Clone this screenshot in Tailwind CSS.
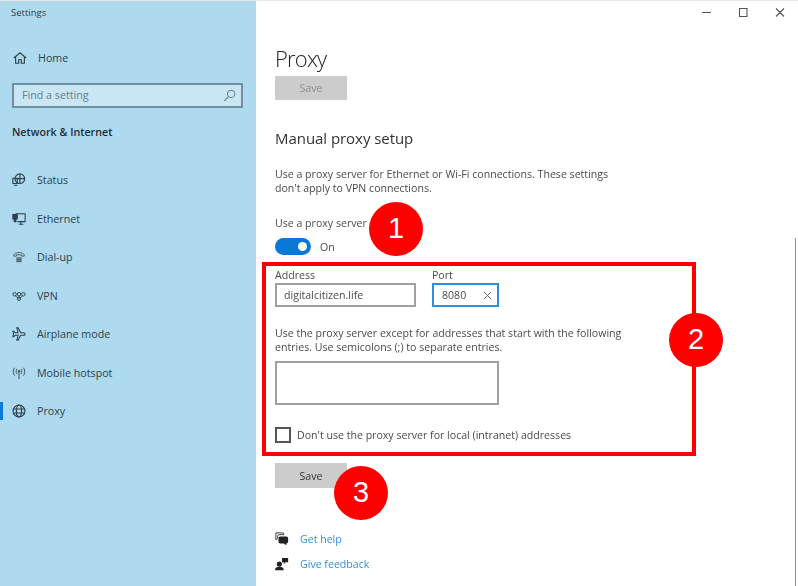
<!DOCTYPE html>
<html lang="en">
<head>
<meta charset="UTF-8">
<title>Settings - Proxy</title>
<script src="https://cdn.jsdelivr.net/npm/@tailwindcss/browser@4"></script>
</head>
<body class="bg-white font-['Open_Sans',sans-serif] overflow-hidden">
<div class="relative w-[798px] h-[586px] flex overflow-hidden blur-[0.7px]">

  <!-- Sidebar -->
  <aside class="w-[256px] h-full bg-[#aedaf0] text-[#2d3f4a] text-[10.7px] shrink-0 relative">
    <div class="pl-[11px] pt-[6px] h-[46px] text-[9.5px] leading-[14px]">Settings</div>
    <div class="flex items-center h-[24px] pl-[13px]">
      <svg class="w-[14px] h-[14px]" viewBox="0 0 16 16" fill="none" stroke="#2d3f4a" stroke-width="1.300"><path d="M1 8 8 2l7 6M3 7v7h3.500v-4h3v4H13V7"/></svg>
      <span class="ml-[11px]">Home</span>
    </div>
    <div class="mt-[13px] ml-[12px] w-[231px] h-[25px] border-2 border-[#6f919f] bg-[#c9e6f4] flex items-center justify-between pl-[8px] pr-[5px] text-[#66808c]">
      <span>Find a setting</span>
      <svg class="w-[13px] h-[13px]" viewBox="0 0 16 16" fill="none" stroke="#66808c" stroke-width="1.300"><circle cx="10" cy="6" r="4.500"/><path d="M6.700 9.300 1.500 14.500"/></svg>
    </div>
    <div class="mt-[16px] ml-[12px] h-[16px] leading-[16px] font-semibold text-[#1f2d35]">Network &amp; Internet</div>

    <nav class="mt-[21px]">
      <div class="flex items-center h-[38.5px] pl-[12px]">
        <svg class="w-[14px] h-[14px]" viewBox="0 0 16 16" fill="none" stroke="#2d3f4a" stroke-width="1.300"><circle cx="9" cy="6.500" r="5.500"/><path d="M3.500 6.500h11M9 1v11M1 6h5v6H1zM2 14h4"/></svg>
        <span class="ml-[11px]">Status</span>
      </div>
      <div class="flex items-center h-[38.5px] pl-[12px]">
        <svg class="w-[14px] h-[14px]" viewBox="0 0 16 16" fill="none" stroke="#2d3f4a" stroke-width="1.200"><path d="M4 2h11v9H6M8 14h5M10 11v3"/><path d="M1 3h5v5H1zM2.500 8v3h2V8" fill="#2d3f4a"/></svg>
        <span class="ml-[11px]">Ethernet</span>
      </div>
      <div class="flex items-center h-[38.5px] pl-[12px]">
        <svg class="w-[14px] h-[14px]" viewBox="0 0 16 16" fill="none" stroke="#4a5a64" stroke-width="1.100"><path d="M2 7V5.500C4 2 12 2 14 5.500V7h-3V5.500H5V7zM5 9h6M5 11h6M5 13h6M6 9v5M8 9v5M10 9v5"/></svg>
        <span class="ml-[11px]">Dial-up</span>
      </div>
      <div class="flex items-center h-[38.5px] pl-[12px]">
        <svg class="w-[14px] h-[14px]" viewBox="0 0 16 16" fill="none" stroke="#2d3f4a" stroke-width="1.100"><circle cx="3" cy="6" r="2"/><circle cx="8" cy="6" r="2"/><circle cx="13" cy="6" r="2"/><circle cx="8" cy="11.500" r="1.700"/><path d="M4 8l3 2.500M8 8v2M12 8l-3 2.500"/></svg>
        <span class="ml-[11px]">VPN</span>
      </div>
      <div class="flex items-center h-[38.5px] pl-[12px]">
        <svg class="w-[14px] h-[14px]" viewBox="0 0 16 16" fill="none" stroke="#2d3f4a" stroke-width="1.200"><path d="M15 8c0-1-1-1.500-2-1.500H10L7 1H5.500l1.500 5.500H3.500L2 5H1l.7 3L1 11h1l1.500-1.500H7L5.500 15H7l3-5.500h3c1 0 2-.5 2-1.500z"/></svg>
        <span class="ml-[11px]">Airplane mode</span>
      </div>
      <div class="flex items-center h-[38.5px] pl-[12px]">
        <svg class="w-[14px] h-[14px]" viewBox="0 0 16 16" fill="none" stroke="#3b4c56" stroke-width="1.100"><path d="M8 7v8M5.500 3.500c-1 1.800-1 3.700 0 5.500M10.500 3.500c1 1.800 1 3.700 0 5.500M2.800 2c-1.800 3-1.800 6 0 9M13.200 2c1.800 3 1.800 6 0 9"/><circle cx="8" cy="6" r="1" fill="#3b4c56"/></svg>
        <span class="ml-[11px]">Mobile hotspot</span>
      </div>
      <div class="relative flex items-center h-[38.5px] pl-[12px]">
        <div class="absolute left-0 top-[10px] w-[3px] h-[18px] bg-[#0a78d7]"></div>
        <svg class="w-[14px] h-[14px]" viewBox="0 0 16 16" fill="none" stroke="#2d3f4a" stroke-width="1.300"><circle cx="8" cy="8" r="6.800"/><ellipse cx="8" cy="8" rx="3" ry="6.800"/><path d="M1.500 5.700h13M1.500 10.300h13"/></svg>
        <span class="ml-[11px]">Proxy</span>
      </div>
    </nav>
  </aside>

  <!-- Main -->
  <main class="flex-1 pl-[19px] text-[10.6px] leading-[14px] text-[#4a4a4a]">
    <h1 class="mt-[44px] h-[28px] text-[22px] leading-[28px] font-light tracking-[-0.8px] text-[#222]">Proxy</h1>
    <div class="mt-[4px] w-[72px] h-[24px] bg-[#cccccc] text-[#8f8f8f] flex items-center justify-center">Save</div>
    <h2 class="mt-[28px] h-[20px] text-[15px] leading-[20px] tracking-[-0.05px] text-[#333]">Manual proxy setup</h2>
    <p class="mt-[19px] w-[350px]">Use a proxy server for Ethernet or Wi-Fi connections. These settings don't apply to VPN connections.</p>
    <p class="mt-[21px]">Use a proxy server</p>
    <div class="mt-[8px] flex items-center h-[17px]">
      <div class="w-[36px] h-[17px] rounded-full bg-[#0a78d7] flex items-center justify-end pr-[4px]">
        <div class="w-[9px] h-[9px] rounded-full bg-white"></div>
      </div>
      <span class="ml-[9px]">On</span>
    </div>
    <div class="mt-[13px] flex gap-[16px]">
      <div>
        <div class="h-[14px]">Address</div>
        <div class="mt-[1px] w-[141px] h-[24px] border-2 border-[#a0a0a0] pl-[7px] flex items-center">digitalcitizen.life</div>
      </div>
      <div>
        <div class="h-[14px]">Port</div>
        <div class="mt-[1px] w-[67px] h-[24px] border-2 border-[#2f8fdf] pl-[8px] pr-[5px] flex items-center justify-between">
          <span>8080</span>
          <svg class="w-[9px] h-[9px]" viewBox="0 0 9 9" fill="none" stroke="#666" stroke-width="1"><path d="M1 1l7 7M8 1 1 8"/></svg>
        </div>
      </div>
    </div>
    <p class="mt-[19px] w-[350px]">Use the proxy server except for addresses that start with the following entries. Use semicolons (;) to separate entries.</p>
    <div class="mt-[7px] w-[224px] h-[44px] border-2 border-[#a0a0a0]"></div>
    <div class="mt-[22px] flex items-center h-[16px]">
      <div class="w-[16px] h-[16px] border-2 border-[#555]"></div>
      <span class="ml-[6px]">Don't use the proxy server for local (intranet) addresses</span>
    </div>
    <div class="mt-[20px] w-[72px] h-[25px] bg-[#cccccc] text-[#333] flex items-center justify-center">Save</div>
    <div class="mt-[43px] flex items-center h-[16px]">
      <svg class="w-[14px] h-[14px]" viewBox="0 0 16 16" fill="#222"><path d="M1 1h8a1 1 0 0 1 1 1v1H5a2 2 0 0 0-2 2v2L1 9z" fill="none" stroke="#222"/><path d="M6 5h7a2 2 0 0 1 2 2v4a2 2 0 0 1-2 2v2l-3-2H6a2 2 0 0 1-2-2V7a2 2 0 0 1 2-2z"/></svg>
      <span class="ml-[11px] text-[#2f90e0]">Get help</span>
    </div>
    <div class="mt-[9px] flex items-center h-[16px]">
      <svg class="w-[14px] h-[14px]" viewBox="0 0 16 16" fill="#222"><path d="M8 1h7v5h-3l-2 2V6H8z"/><circle cx="5" cy="8" r="3"/><path d="M0 15c0-3 2-4 5-4s5 1 5 4z"/></svg>
      <span class="ml-[11px] text-[#2f90e0]">Give feedback</span>
    </div>
  </main>

  <!-- Window controls -->
  <div class="absolute top-0 left-0 w-full h-px bg-[#e8e8e8]"></div>
  <svg class="absolute left-[701px] top-[7px] w-[84px] h-[10px]" viewBox="0 0 84 10" fill="none" stroke="#555" stroke-width="1.100"><path d="M1 5.500h9M38.500 1.500h7.500v8h-7.500zM75 1.500l8 8M83 1.500l-8 8"/></svg>

  <!-- Scrollbar -->
  <div class="absolute left-[795px] top-[238px] w-[1px] h-[348px] bg-[#8e8e8e]"></div>

  <!-- Annotations -->
  <div class="absolute left-[262px] top-[262px] w-[434px] h-[194px] border-[4px] border-[#ff0000]"></div>
  <div class="absolute left-[369px] top-[202px] w-[54px] h-[54px] rounded-full bg-[#ff0000] text-white text-[29px] flex items-center justify-center font-['Liberation_Sans',sans-serif]">1</div>
  <div class="absolute left-[669px] top-[313px] w-[54px] h-[54px] rounded-full bg-[#ff0000] text-white text-[29px] flex items-center justify-center font-['Liberation_Sans',sans-serif]">2</div>
  <div class="absolute left-[334px] top-[466px] w-[54px] h-[54px] rounded-full bg-[#ff0000] text-white text-[29px] flex items-center justify-center font-['Liberation_Sans',sans-serif]">3</div>
</div>
</body>
</html>
